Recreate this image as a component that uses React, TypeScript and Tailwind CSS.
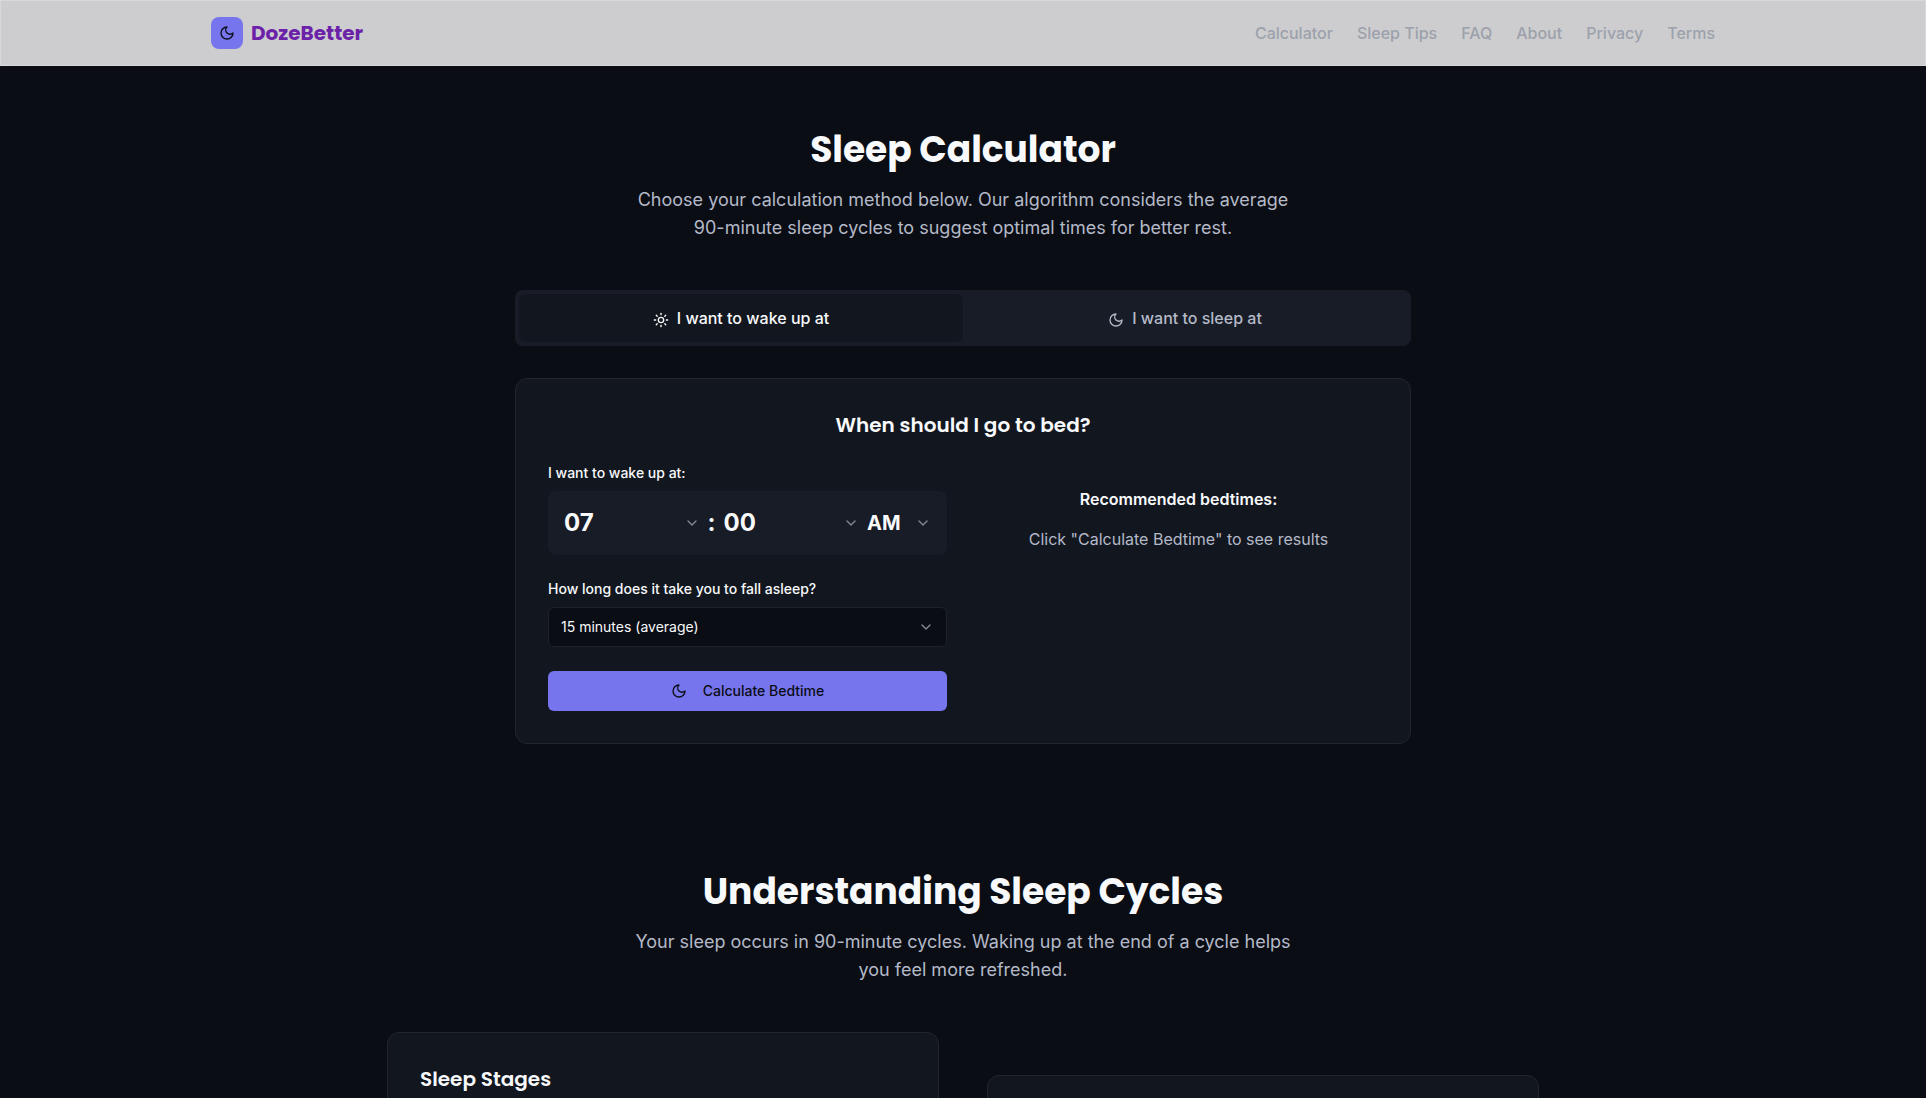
import { useState, type ReactNode } from "react";
import { ChevronDown, Sun } from "lucide-react";

const navLinks = ["Calculator", "Sleep Tips", "FAQ", "About", "Privacy", "Terms"];

const hours = ["01", "02", "03", "04", "05", "06", "07", "08", "09", "10", "11", "12"];
const minutes = ["00", "05", "10", "15", "20", "25", "30", "35", "40", "45", "50", "55"];

const heading = "font-[Poppins,Inter,sans-serif]";

function MoonIcon({ className }: { className?: string }) {
  return (
    <svg
      viewBox="0 0 24 24"
      fill="none"
      stroke="currentColor"
      strokeWidth="2"
      strokeLinecap="round"
      strokeLinejoin="round"
      aria-hidden="true"
      className={className}
    >
      <path d="M12 3a6 6 0 0 0 9 9 9 9 0 1 1-9-9Z" />
    </svg>
  );
}

function SiteHeader() {
  return (
    <header className="border border-[#d7d8da] bg-[#cdcdcf]">
      <div className="mx-auto flex w-full max-w-[1536px] items-center justify-between px-4 py-4">
        <a href="#" className="flex items-center gap-2">
          <span className="flex size-8 items-center justify-center rounded-lg bg-[#7775ee] text-[#0a0d14]">
            <MoonIcon className="size-4" />
          </span>
          <span className={`${heading} text-xl leading-7 font-bold text-[#6b21a8]`}>
            DozeBetter
          </span>
        </a>
        <nav className="flex items-center gap-6">
          {navLinks.map((link) => (
            <a key={link} href="#" className="font-medium text-[#9ca1ab]">
              {link}
            </a>
          ))}
        </nav>
      </div>
    </header>
  );
}

function SectionIntro({ title, copy }: { title: string; copy: string }) {
  return (
    <div className="mb-12 text-center">
      <h2 className={`${heading} mb-4 text-4xl font-bold text-[#f8f9fb]`}>{title}</h2>
      <p className="mx-auto max-w-2xl text-lg leading-7 text-[#b4b9c8]">{copy}</p>
    </div>
  );
}

function TabButton({
  active,
  onClick,
  children,
}: {
  active: boolean;
  onClick: () => void;
  children: ReactNode;
}) {
  return (
    <button
      type="button"
      role="tab"
      aria-selected={active}
      onClick={onClick}
      className={`flex flex-1 items-center justify-center gap-2 rounded-md py-3 font-medium ${
        active ? "bg-[#12171f] text-[#f8f9fb]" : "text-[#b4b9c8]"
      }`}
    >
      {children}
    </button>
  );
}

function TimeSelect({
  label,
  options,
  initial,
  wrapper,
  text,
}: {
  label: string;
  options: string[];
  initial: string;
  wrapper: string;
  text: string;
}) {
  return (
    <div className={`relative ${wrapper}`}>
      <select
        aria-label={label}
        defaultValue={initial}
        className={`h-8 w-full appearance-none bg-transparent font-bold text-[#f8f9fb] outline-none ${text}`}
      >
        {options.map((option) => (
          <option key={option}>{option}</option>
        ))}
      </select>
      <ChevronDown className="pointer-events-none absolute top-2 right-0 size-4 text-[#858991]" />
    </div>
  );
}

function BedtimeCard() {
  return (
    <div className="rounded-xl border border-[#21252e] bg-[#12171f] p-8">
      <h3 className={`${heading} mb-6 text-center text-xl leading-7 font-semibold text-[#f8f9fb]`}>
        When should I go to bed?
      </h3>
      <div className="grid gap-8 md:grid-cols-2">
        <form className="space-y-6" onSubmit={(e) => e.preventDefault()}>
          <fieldset>
            <legend className="mb-2 text-sm leading-5 font-medium text-[#f8f9fb]">
              I want to wake up at:
            </legend>
            <div className="flex items-center gap-2 rounded-lg bg-[#181c26] p-4">
              <TimeSelect label="Hour" options={hours} initial="07" wrapper="flex-1" text="text-2xl" />
              <span className="text-2xl font-bold text-[#f8f9fb]">:</span>
              <TimeSelect label="Minute" options={minutes} initial="00" wrapper="flex-1" text="text-2xl" />
              <TimeSelect
                label="AM or PM"
                options={["AM", "PM"]}
                initial="AM"
                wrapper="w-16"
                text="text-xl"
              />
            </div>
          </fieldset>

          <div>
            <label
              htmlFor="fall-asleep"
              className="mb-2 block text-sm leading-5 font-medium text-[#f8f9fb]"
            >
              How long does it take you to fall asleep?
            </label>
            <div className="relative">
              <select
                id="fall-asleep"
                defaultValue="15 minutes (average)"
                className="h-10 w-full appearance-none rounded-md border border-[#1d212a] bg-[#0a0d14] px-3 text-sm text-[#f8f9fb] outline-none"
              >
                <option>5 minutes (fast)</option>
                <option>15 minutes (average)</option>
                <option>30 minutes (slow)</option>
              </select>
              <ChevronDown className="pointer-events-none absolute top-3 right-[13px] size-4 text-[#858991]" />
            </div>
          </div>

          <button
            type="submit"
            className="flex h-10 w-full items-center justify-center gap-4 rounded-md bg-[#7775ee] text-sm font-medium text-[#0a0d14]"
          >
            <MoonIcon className="size-4" />
            Calculate Bedtime
          </button>
        </form>

        <div className="py-6 text-center">
          <h4 className="mb-4 font-semibold text-[#f8f9fb]">Recommended bedtimes:</h4>
          <p className="text-[#b4b9c8]">Click "Calculate Bedtime" to see results</p>
        </div>
      </div>
    </div>
  );
}

export default function App() {
  const [mode, setMode] = useState<"wake" | "sleep">("wake");

  return (
    <div className="h-screen overflow-hidden bg-[#0a0d14] font-[Inter,sans-serif] text-base">
      <SiteHeader />
      <main>
        <section className="px-4 py-16">
          <SectionIntro
            title="Sleep Calculator"
            copy="Choose your calculation method below. Our algorithm considers the average 90-minute sleep cycles to suggest optimal times for better rest."
          />
          <div className="mx-auto max-w-4xl">
            <div role="tablist" className="mb-8 flex rounded-lg bg-[#181c26] p-1">
              <TabButton active={mode === "wake"} onClick={() => setMode("wake")}>
                <Sun className="mt-1 size-4" />
                I want to wake up at
              </TabButton>
              <TabButton active={mode === "sleep"} onClick={() => setMode("sleep")}>
                <MoonIcon className="mt-1 size-4" />
                I want to sleep at
              </TabButton>
            </div>
            <BedtimeCard />
          </div>
        </section>

        <section className="px-4 py-16">
          <SectionIntro
            title="Understanding Sleep Cycles"
            copy="Your sleep occurs in 90-minute cycles. Waking up at the end of a cycle helps you feel more refreshed."
          />
          <div className="mx-auto grid max-w-6xl items-center gap-12 md:grid-cols-2">
            <div className="h-96 rounded-xl border border-[#21252e] bg-[#12171f] p-8">
              <h3 className={`${heading} text-xl leading-7 font-semibold text-[#f8f9fb]`}>
                Sleep Stages
              </h3>
            </div>
            <div className="h-[298px] rounded-xl border border-[#21252e] bg-[#12171f] p-8" />
          </div>
        </section>
      </main>
    </div>
  );
}
